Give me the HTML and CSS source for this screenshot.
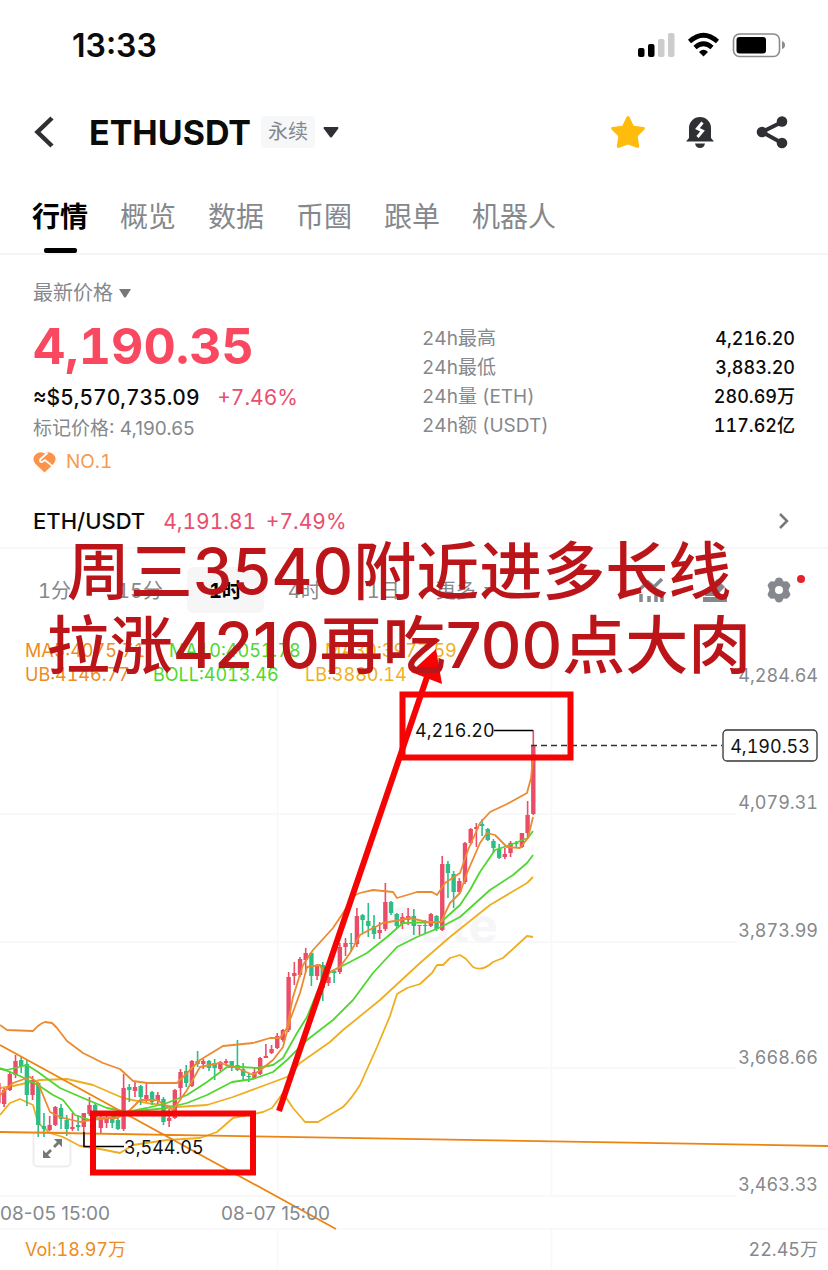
FILE: index.html
```html
<!DOCTYPE html>
<html lang="zh-CN">
<head>
<meta charset="UTF-8">
<meta name="viewport" content="width=device-width, initial-scale=1.0">
<title>ETHUSDT 永续</title>
<link rel="stylesheet" href="styles.css">
</head>
<body>

<div class="status-bar">
    <time class="clock">13:33</time>
    <svg class="status-icons" width="148" height="26" viewBox="638 32 148 26" aria-hidden="true">
        <rect x="638" y="48" width="6.5" height="9" rx="2"/>
        <rect x="648" y="44" width="6.5" height="13" rx="2"/>
        <rect x="658" y="39" width="6.5" height="18" rx="2" fill="#ccc"/>
        <rect x="668" y="33" width="6.5" height="24" rx="2" fill="#ccc"/>
        <g fill="none" stroke="#000" stroke-width="4.6">
            <path d="M689.5 41.5Q703.5 29 717.5 41.5"/>
            <path d="M695 47.5Q703.5 40 712 47.5"/>
        </g>
        <path d="M699 52Q703.5 47.5 708 52L703.5 56.5Z"/>
        <rect x="733.5" y="34" width="46" height="22.5" rx="6" fill="#fff" stroke="#8a8a8a" stroke-width="1.6"/>
        <rect x="736.5" y="37" width="29.5" height="16.5" rx="3"/>
        <path d="M782 41Q785 42 785 45T782 49Z" fill="#8a8a8a"/>
    </svg>
</div>

<header class="header">
    <button class="icon-btn back" aria-label="返回">
        <svg width="22" height="32" viewBox="0 0 22 32"><path d="M19 2L4.5 16 19 30" fill="none" stroke="#2f3033" stroke-width="4.5"/></svg>
    </button>
    <h1>ETHUSDT</h1>
    <button class="pair-btn"><span class="tag">永续</span>
        <svg width="16" height="11" viewBox="0 0 16 11"><path d="M1 0h14q1 1 0 2L9 10q-1 1-2 0L1 2Q0 1 1 0Z" fill="#2f3033"/></svg>
    </button>
    <div class="header-actions">
        <button class="icon-btn" aria-label="收藏">
            <svg width="36" height="36" viewBox="0 0 36 36"><path d="M16.5 3q1.5-2 3 0l4.2 8.8 10 1.2q2 .6.8 2.4l-6.8 6.8 1.5 10q0 2.2-2.2 1.6L18 30.5l-9 3.3q-2.2.6-2.200-1.600l1.500-10L1.5 15.4Q.3 13.6 2.3 13l10-1.2Z" fill="#ffbc0d"/></svg>
        </button>
        <button class="icon-btn" aria-label="价格提醒">
            <svg width="36" height="36" viewBox="0 0 36 36">
                <path d="M7 24V14a11 11 0 0 1 22 0v10l3 3.5H4Z" fill="#2f3033"/>
                <path d="M13 29.5h10q-1 4.5-5 4.5t-5-4.5Z" fill="#2f3033"/>
                <path d="M20.5 8.5L15.5 14.5l5 2.5-5 6" fill="none" stroke="#fff" stroke-width="3"/>
            </svg>
        </button>
        <button class="icon-btn" aria-label="分享">
            <svg width="36" height="36" viewBox="0 0 36 36">
                <path d="M28 8L8 18l20 11" fill="none" stroke="#2f3033" stroke-width="4"/>
                <g fill="#2f3033"><circle cx="28" cy="7.5" r="5.3"/><circle cx="8" cy="18" r="5.3"/><circle cx="28" cy="29" r="5.3"/></g>
            </svg>
        </button>
    </div>
</header>

<nav class="tabs">
    <a href="#" class="active">行情</a>
    <a href="#">概览</a>
    <a href="#">数据</a>
    <a href="#">币圈</a>
    <a href="#">跟单</a>
    <a href="#">机器人</a>
</nav>

<section class="quote">
    <div class="quote-price">
        <button class="price-type">最新价格
            <svg width="12" height="9" viewBox="0 0 12 9"><path d="M0 0h12L7 8Q6 9 5 8Z" fill="#777"/></svg>
        </button>
        <div class="last-price">4,190.35</div>
        <div class="fiat">≈$5,570,735.09 <span class="up">+7.46%</span></div>
        <div class="mark">标记价格: 4,190.65</div>
        <div class="rank">
            <svg width="23" height="21" viewBox="0 0 23 21">
                <path d="M11.5 20.5L2.5 12Q-1.5 7 2 3q4-4.5 9.5-1.5Q17-1.5 21 3q3.5 4-.5 9Z" fill="#fc934a"/>
                <path d="M14.5 1L7.5 7q-1.5 3 1.5 3l3-2 8.5 7" fill="none" stroke="#fff" stroke-width="1.8"/>
            </svg>
            NO.1
        </div>
    </div>
    <dl class="stats">
        <dt>24h最高</dt><dd>4,216.20</dd>
        <dt>24h最低</dt><dd>3,883.20</dd>
        <dt>24h量 (ETH)</dt><dd>280.69万</dd>
        <dt>24h额 (USDT)</dt><dd>117.62亿</dd>
    </dl>
</section>

<a class="spot" href="#">
    <span class="spot-pair">ETH/USDT</span>
    <span class="up">4,191.81 <span class="spot-change">+7.49%</span></span>
    <svg width="12" height="18" viewBox="0 0 12 18"><path d="M2 2l7 7-7 7" fill="none" stroke="#777" stroke-width="2.5"/></svg>
</a>

<main class="chart-area">
    <div class="periods">
        <button>1分</button>
        <button>15分</button>
        <button class="selected">1时</button>
        <button>4时</button>
        <button>1日</button>
        <button class="more">更多
            <svg width="9" height="6" viewBox="0 0 9 6"><path d="M0 0h9L4.5 6Z" fill="#85888c"/></svg>
        </button>
        <div class="chart-tools">
            <button aria-label="指标">
                <svg width="26" height="26" viewBox="0 0 26 26"><path d="M3 17v8M11 19v6M18 15v10M24 17v8M2 12l8-7 6 5 8-8" fill="none" stroke="#85888c" stroke-width="3.5"/></svg>
            </button>
            <button aria-label="画线">
                <svg width="26" height="26" viewBox="0 0 26 26"><path d="M1 20h24v5H1ZM3 14L15 2l8 8-9 9H3Z" fill="#85888c"/></svg>
            </button>
            <button class="settings" aria-label="设置">
                <svg width="26" height="26" viewBox="0 0 26 26">
                    <path d="M10 1.5Q13-.5 16 1.5l1.5 3 3.5-.3q2.5 1.3 3.5 4.3L22.500 13l2 4.500q-1 3-3.5 4.3l-3.5-.3-1.5 3q-3 2-6 0l-1.5-3-3.500.3Q2.5 20.5 1.5 17.5l2-4.5-2-4.5Q2.5 5.5 5 4.2l3.5.3Z" fill="#85888c"/>
                    <circle cx="13" cy="13" r="4" fill="#fff"/>
                </svg>
            </button>
        </div>
    </div>

    <svg class="chart" viewBox="0 630 828 640">
        <path class="grid" d="M0 814H736M0 942H736M0 1068H736M0 1196H736M0 1229H828M277.5 630V1196M551.5 630V1196M277.5 1229V1270M551.5 1229V1270"/>
        <text class="watermark" x="498" y="943" text-anchor="end">Gate</text>

        <rect x="33.5" y="1131.5" width="37" height="35" rx="4" fill="#fff" stroke="#eee" stroke-width="2"/>

        <path class="lb" d="M0 1115L10 1103 20 1099 33 1105 38 1123 50 1133 63 1137 80 1146 100 1149 120 1153 133 1145 167 1140 200 1138 217 1132 233 1118 263 1112 272 1108 283 1093 293 1108 305 1122H318L343 1107Q352 1098 360 1085L377 1047 390 1016 397 994 407 988 420 984 432 973 437 965H443L450 958 460 955 466 959 473 967Q482 972 493 962L503 958 527 936 533 937"/>
        <path class="lb" d="M0 1088L13 1086 40 1080 67 1079 93 1085 123 1098 147 1103 177 1107 207 1105 233 1097 260 1087 287 1077 300 1063 330 1042 343 1030 380 1000 420 963 450 937 490 905 527 883 533 877"/>
        <g id="candles"></g>
        <path class="boll" d="M0 1068L20 1076 38 1085 53 1095 63 1100 75 1115 90 1120 110 1118 127 1112 147 1108 167 1103 187 1095 207 1082 227 1067 240 1067 257 1068 273 1065 283 1058 297 1033 307 1017 318 990 330 972 350 962 367 953 387 937 403 923 441 922 460 905 470 890 480 872 495 850 510 845 528 838 533 831"/>
        <path class="boll" d="M0 1069L7 1070 27 1065 38 1072 60 1088 83 1098 107 1108 127 1112 147 1110 167 1108 187 1103 207 1095 232 1082 253 1079 273 1072 287 1060 307 1040 333 1020 353 1000 373 973 397 947 417 937 441 927 460 917 490 890 513 875 527 863 533 855"/>
        <path class="ub" d="M0 1095L13 1083 30 1077 38 1083 50 1112 60 1117 80 1122 100 1118 117 1118 128 1112 140 1100 157 1100 173 1110 187 1090 200 1067 220 1063 237 1068 253 1075 263 1068 273 1060 283 1047 290 1020 300 993 307 967 320 965 325 975 340 967 350 953 360 935 373 928 383 923 400 920 410 918 427 922 441 922 450 903 460 893 467 873 480 843 487 833 495 835 507 847 520 848 528 838 533 817"/>
        <path class="ub" d="M0 1025L7 1030 33 1031Q39 1024 45 1022L52 1023 57 1028 67 1041 83 1053 103 1063 120 1069 133 1081 147 1083 177 1083 200 1060 223 1046 253 1043 270 1038 280 1038 287 1028 293 997 303 965 313 950 333 928 347 907Q352 895 360 893L373 890 393 892 397 898 417 892 432 892 437 895 445 883 460 873 468 850 480 823 490 812 507 804 527 793 531 778 533 757"/>
        <path class="trend" d="M0 1045L336 1229M0 1132L828 1146"/>

        <g fill="#777">
            <path d="M54 1139h8v8l-3-3-4 4-2-2 4-4ZM43 1158v-8l3 3 4-4 2 2-4 4 3 3Z"/>
        </g>
        <path d="M84 1132V1146.5H124M494 730.5H533" fill="none" stroke="#000" stroke-width="1.4"/>
        <path d="M531 745.5H722" fill="none" stroke="#333" stroke-width="1.4" stroke-dasharray="6 4"/>
        <text class="extreme" x="415" y="737">4,216.20</text>
        <text class="extreme" x="124" y="1154">3,544.05</text>

        <g class="axis" text-anchor="end">
            <text x="818" y="682">4,284.64</text>
            <text x="818" y="809">4,079.31</text>
            <text x="818" y="937">3,873.99</text>
            <text x="818" y="1064">3,668.66</text>
            <text x="818" y="1191">3,463.33</text>
            <text x="818" y="1256">22.45万</text>
        </g>
        <g class="axis dates">
            <text x="0" y="1220">08-05 15:00</text>
            <text x="221" y="1220">08-07 15:00</text>
        </g>
        <rect x="723" y="730" width="94" height="31" rx="4" fill="#fff" stroke="#333" stroke-width="1.3"/>
        <text class="extreme" x="770" y="753" text-anchor="middle">4,190.53</text>

        <g class="legend">
            <text x="25" y="657" fill="#ee8b22">MA5:4075.71</text>
            <text x="169" y="657" fill="#4fd72f">MA10:4051.78</text>
            <text x="325" y="657" fill="#eeb01e">MA30:3977.59</text>
            <text x="25" y="681" fill="#ee8b22">UB:4146.77</text>
            <text x="153" y="681" fill="#4fd72f">BOLL:4013.46</text>
            <text x="305" y="681" fill="#eeb01e">LB:3880.14</text>
            <text x="25" y="1256" fill="#ee8b22">Vol:18.97万</text>
        </g>

        <g class="marks">
            <rect x="402.5" y="694.5" width="168" height="63"/>
            <rect x="93" y="1113.5" width="160" height="59"/>
            <path d="M279 1111L427 677"/>
            <path class="arrow-head" d="M436 649L442 684 411 672Z"/>
        </g>
    </svg>

    <p class="caption">周三3540附近进多长线<br>拉涨4210再吃700点大肉</p>
</main>

<script>
    // [wick top, body top, body bottom, wick bottom, 1 = up (red) / 0 = down (green)]
    const candles = [
        [1080,1083,1103,1105,1], [1088,1090,1104,1107,1], [1071,1074,1090,1091,1], [1055,1061,1075,1078,1],
        [1057,1060,1066,1073,0], [1060,1064,1095,1106,0], [1076,1080,1095,1100,1], [1082,1083,1125,1137,0],
        [1113,1126,1129,1137,0], [1116,1125,1130,1131,1], [1106,1107,1125,1126,1], [1104,1108,1119,1129,0],
        [1115,1120,1129,1136,0], [1113,1127,1129,1131,1], [1115,1125,1127,1131,0], [1113,1113,1127,1147,1],
        [1097,1105,1114,1116,1], [1103,1105,1120,1127,0], [1115,1117,1128,1133,1], [1115,1117,1123,1128,1],
        [1115,1117,1123,1128,0], [1117,1120,1129,1130,0], [1074,1088,1129,1131,1], [1084,1087,1090,1102,0],
        [1081,1087,1091,1097,1], [1085,1086,1097,1105,0], [1083,1095,1099,1102,1], [1091,1092,1102,1105,0],
        [1092,1095,1101,1104,1], [1097,1099,1122,1125,0], [1109,1118,1121,1127,1], [1089,1090,1118,1119,1],
        [1069,1072,1088,1099,1], [1065,1071,1083,1087,0], [1060,1061,1086,1087,1], [1051,1061,1064,1067,0],
        [1059,1061,1064,1069,1], [1060,1061,1068,1071,0], [1059,1063,1068,1080,0], [1061,1062,1069,1071,1],
        [1059,1061,1063,1066,1], [1061,1061,1068,1071,0], [1040,1065,1070,1071,0], [1063,1069,1076,1081,0],
        [1073,1076,1077,1082,0], [1068,1072,1078,1079,1], [1057,1058,1074,1075,1], [1044,1056,1058,1058,1],
        [1045,1049,1053,1054,1], [1033,1036,1048,1049,1], [1029,1030,1040,1042,1], [972,977,1030,1032,1],
        [962,973,976,985,1], [957,959,975,977,1], [948,953,960,972,1], [952,953,976,986,0],
        [964,965,976,980,1], [962,965,988,1001,0], [975,977,983,986,1], [970,971,973,983,0],
        [943,947,972,974,1], [938,943,947,956,1], [933,943,944,952,0], [908,916,944,947,1],
        [914,915,920,933,0], [903,921,926,937,0], [915,926,934,939,0], [922,930,933,939,1],
        [883,902,929,931,1], [901,902,913,915,0], [913,914,926,928,0], [913,917,924,929,1],
        [908,916,920,925,1], [909,916,926,935,0], [925,925,926,935,1], [920,925,926,933,0],
        [913,914,926,927,1], [915,916,929,931,0], [856,864,930,931,1], [861,864,873,898,0],
        [871,874,892,908,0], [878,881,892,894,1], [842,843,882,884,1], [828,829,843,845,1],
        [823,827,829,847,1], [819,824,826,836,0], [828,829,840,841,0], [839,841,848,853,0],
        [844,849,858,859,0], [848,854,857,859,1], [841,843,853,857,1], [841,843,844,848,0],
        [833,833,847,848,1], [801,815,833,838,1], [730,745,814,815,1]
    ];

    const step = 5.69;
    const lastX = 533.3;

    document.getElementById('candles').innerHTML = candles.map((c, i) => {
        const x = lastX - (candles.length - 1 - i) * step;
        return `<path class="${c[4] ? 'rise' : 'fall'}" d="M${x - 2.2} ${c[1]}h4.4V${c[2]}h-4.4ZM${x - 0.8} ${c[0]}h1.6V${c[3]}h-1.6Z"/>`;
    }).join('');
</script>
</body>
</html>
```

FILE: styles.css
```css
* {
    box-sizing: border-box;
}
body {
    margin: 0;
    background-color: #fff;
    color: #0b0b0c;
    font-family: Inter, "Noto Sans CJK SC", sans-serif;
    font-size: 20px;
    font-variant-numeric: tabular-nums;
    overflow-x: hidden;
}
button {
    padding: 0;
    border: none;
    background: none;
    font: inherit;
    font-variant-numeric: inherit;
    color: inherit;
    cursor: pointer;
}
a {
    color: inherit;
    text-decoration: none;
}
svg {
    display: block;
}
.status-bar {
    display: flex;
    justify-content: space-between;
    align-items: center;
    height: 90px;
    padding: 0 42px 0 72px;
}
.clock {
    font-size: 32px;
    font-weight: 600;
    font-variant-numeric: normal;
}

/* Header */
.header {
    display: flex;
    align-items: center;
    height: 84px;
    padding: 0 38px 0 33px;
}
.header h1 {
    margin: 0 10px 0 34px;
    font-size: 34px;
    font-weight: 700;
}
.pair-btn {
    display: flex;
    align-items: center;
    gap: 8px;
}
.tag {
    padding: 0 7px;
    border-radius: 3px;
    background-color: #f6f7f8;
    color: #85888c;
    line-height: 32px;
}
.header-actions {
    display: flex;
    gap: 36px;
    margin-left: auto;
}

.tabs {
    display: flex;
    gap: 32px;
    height: 81px;
    padding: 0 32px;
    border-bottom: 2px solid #f5f5f6;
    font-size: 28px;
    line-height: 86px;
    color: #85888c;
}
.tabs .active {
    display: flex;
    flex-direction: column;
    align-items: center;
    color: #000;
    font-weight: 700;
}
.tabs .active::after {
    content: "";
    flex: none;
    width: 33px;
    height: 5px;
    margin-top: -12px;
    border-radius: 2px;
    background-color: #000;
}

/* Price and 24h figures */
.quote {
    display: grid;
    grid-template-columns: 1fr 1fr;
    gap: 16px;
    padding: 22px 33px 0;
}
.price-type {
    display: flex;
    align-items: center;
    gap: 6px;
    line-height: 32px;
    color: #85888c;
}
.last-price {
    font-size: 50px;
    font-weight: 700;
    line-height: 74px;
    color: #f84960;
}
.fiat {
    font-size: 21px;
    font-weight: 500;
    line-height: 30px;
}
.fiat .up {
    margin-left: 12px;
}
.up {
    color: #e94e6e;
    font-weight: 400;
}
.mark {
    font-size: 19px;
    font-variant-numeric: normal;
    line-height: 32px;
    color: #85888c;
}
.rank {
    display: flex;
    align-items: center;
    gap: 10px;
    font-size: 19px;
    line-height: 34px;
    color: #f79a52;
}
.stats {
    display: grid;
    grid-template-columns: auto auto;
    align-content: start;
    margin: 0;
    padding-top: 47px;
    font-size: 19px;
    line-height: 29px;
}
.stats dt {
    color: #85888c;
}
.stats dd {
    margin: 0;
    text-align: right;
    font-size: 18px;
    font-weight: 500;
}
.spot {
    display: flex;
    align-items: center;
    gap: 18px;
    height: 54px;
    margin-top: 16px;
    padding: 0 38px 0 33px;
    border-bottom: 2px solid #f7f7f8;
    font-size: 21px;
}
.spot-pair {
    font-size: 22px;
    font-weight: 500;
}
.spot-change {
    margin-left: 4px;
}
.spot svg {
    margin-left: auto;
}

/* Chart */
.chart-area {
    position: relative;
}
.periods {
    display: flex;
    align-items: center;
    gap: 2px;
    height: 81px;
    padding: 0 36px 0 16px;
    color: #85888c;
}
.periods > button {
    height: 46px;
    padding: 0 22px;
    border-radius: 6px;
}
.periods .selected {
    background-color: #f6f6f7;
    color: #000;
    font-weight: 700;
}
.periods .more {
    display: flex;
    align-items: center;
    gap: 8px;
    padding: 0 12px;
}
.chart-tools {
    display: flex;
    gap: 38px;
    margin-left: auto;
}
.settings {
    position: relative;
}
.settings::after {
    content: "";
    position: absolute;
    top: -2px;
    right: -13px;
    width: 8px;
    height: 8px;
    border-radius: 50%;
    background-color: #e5232b;
}
.chart {
    width: 100%;
    height: auto;
    font-size: 18px;
}
.grid {
    fill: none;
    stroke: #f8f8f9;
    stroke-width: 1.5;
}
.watermark {
    font-size: 50px;
    font-weight: 700;
    fill: #f6f6f8;
}
.ub, .boll, .lb, .trend {
    fill: none;
    stroke-width: 1.8;
    stroke-linejoin: round;
}
.ub { stroke: #ec8a32; }
.boll { stroke: #4fd72f; }
.lb { stroke: #efae20; }
.trend { stroke: #ee8410; }
.rise { fill: #ea4d68; }
.fall { fill: #2ebd85; }
.axis {
    fill: #85888c;
}
.dates {
    font-size: 19px;
    font-variant-numeric: normal;
}
.extreme {
    fill: #111;
}
.marks {
    fill: none;
    stroke: #f60404;
    stroke-width: 6;
}
.arrow-head {
    fill: #f60404;
    stroke: none;
}
.caption {
    position: absolute;
    top: -15px;
    left: 0;
    width: 100%;
    margin: 0;
    padding-right: 30px;
    font-size: 63px;
    font-weight: 500;
    font-variant-numeric: normal;
    line-height: 74px;
    text-align: center;
    white-space: nowrap;
    color: #bb1519;
}
```
